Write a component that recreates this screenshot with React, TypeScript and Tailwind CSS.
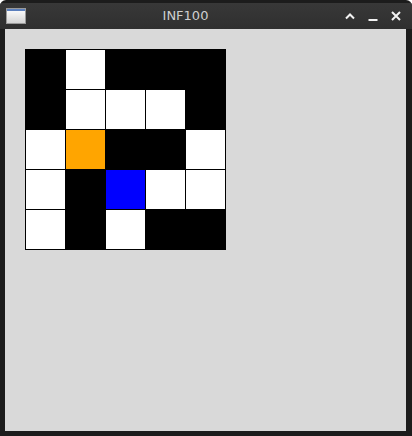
const B = "bg-black";
const W = "bg-white";
const O = "bg-[#ffa500]";
const U = "bg-[#0000ff]";

const cells = [
  [B, W, B, B, B],
  [B, W, W, W, B],
  [W, O, B, B, W],
  [W, B, U, W, W],
  [W, B, W, B, B],
];

function WindowIcon() {
  return (
    <div className="w-[20px] h-[16px] border border-[#9a9a9a] flex flex-col bg-gradient-to-b from-white to-[#d4d4d4]">
      <div className="h-[2px] bg-[#5b7fbd]" />
    </div>
  );
}

function Controls() {
  return (
    <div className="flex items-center gap-[13px] pr-[3px]">
      <svg width="10" height="10" viewBox="0 0 10 10">
        <path d="M1 7.5 L5 3.5 L9 7.5" stroke="#f2f2f2" strokeWidth="2" fill="none" />
      </svg>
      <svg width="10" height="10" viewBox="0 0 10 10">
        <path d="M0.5 9 H9.5" stroke="#f2f2f2" strokeWidth="2" fill="none" />
      </svg>
      <svg width="10" height="10" viewBox="0 0 10 10">
        <path d="M1 1 L9 9 M9 1 L1 9" stroke="#f2f2f2" strokeWidth="2" fill="none" />
      </svg>
    </div>
  );
}

export default function App() {
  return (
    <div className="w-[412px] h-[436px] bg-[#1c1c1c] rounded-t-[6px] flex flex-col overflow-hidden">
      {/* title bar */}
      <div className="h-[26px] mt-[3px] flex items-center pl-[6px] pr-[8px] bg-gradient-to-b from-[#383838] to-[#2f2f2f]">
        <WindowIcon />
        <div className="flex-1 text-center text-[13px] text-[#cfcfcf] font-['DejaVu_Sans',sans-serif]">
          INF100
        </div>
        <Controls />
      </div>

      {/* body */}
      <div className="flex-1 ml-[5px] mr-[6px] mb-[5px] bg-[#d9d9d9] pl-[20px] pt-[20px]">
        <div className="grid grid-cols-[repeat(5,39px)] gap-[1px] border border-black bg-black w-fit">
          {cells.flat().map((c, i) => (
            <div key={i} className={`${c} h-[39px]`} />
          ))}
        </div>
      </div>
    </div>
  );
}
